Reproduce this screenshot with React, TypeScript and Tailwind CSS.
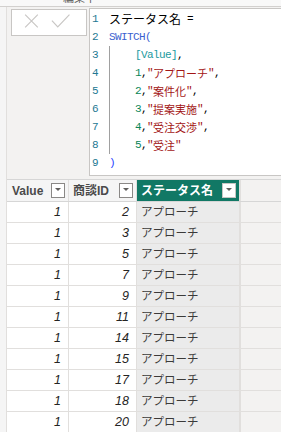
import React from "react";

const rows = [2, 3, 5, 7, 9, 11, 14, 15, 17, 18, 20];

const M = ({ c, children }: { c: string; children: React.ReactNode }) => (
  <span
    className={`${c} text-[11px] tracking-[-0.6px]`}
    style={{ fontFamily: '"Liberation Mono", monospace' }}
  >
    {children}
  </span>
);

const J = ({ c, children }: { c: string; children: React.ReactNode }) => (
  <span className={`${c} text-[11px]`} style={{ fontFamily: '"Noto Sans CJK JP", sans-serif' }}>
    {children}
  </span>
);

function CodeLine({ n, children, indent }: { n: number; children: React.ReactNode; indent?: boolean }) {
  return (
    <div className="flex h-[18px] items-center">
      <div
        className="w-[19px] pl-[2px] text-[11px] text-[#237893]"
        style={{ fontFamily: '"Liberation Mono", monospace' }}
      >
        {n}
      </div>
      {indent && <div className="w-[26px] h-[18px] border-l border-[#a0a0a0] shrink-0" />}
      <div className="flex items-center whitespace-pre">{children}</div>
    </div>
  );
}

function Drop({ light }: { light?: boolean }) {
  return (
    <div
      className={`w-[14px] h-[15px] bg-white border ${light ? "border-[#c8c6c4]" : "border-[#8a8886]"} flex justify-center pt-[4px] shrink-0`}
    >
      <div className="w-0 h-0 border-l-[3px] border-r-[3px] border-t-[3px] border-l-transparent border-r-transparent border-t-[#605e5c]" />
    </div>
  );
}

export default function App() {
  return (
    <div
      className="w-[281px] h-[432px] overflow-hidden bg-[#f3f2f1] flex flex-col"
      style={{ fontFamily: '"Liberation Sans", "Noto Sans CJK JP", sans-serif' }}
    >
      <div className="h-[7px] bg-[#f8f8f8] border-b border-[#d2d0ce] overflow-hidden shrink-0 pl-[63px]">
        <div className="text-[11px] leading-[12px] -mt-[8px] text-[#605e5c]">編集中</div>
      </div>
      <div className="flex flex-1 min-h-0">
        <div className="w-[7px] border-r border-[#e1dfdd] bg-[#f5f5f5] shrink-0" />
        <div className="flex-1 flex flex-col min-w-0">
          <div className="flex h-[169px] shrink-0">
            <div className="ml-[4px] mt-[2px] w-[76px] h-[27px] bg-white border border-[#c8c6c4] flex items-center shrink-0">
              <svg width="76" height="27" viewBox="0 0 76 27" className="block">
                <path d="M13.5 5.5 L26.5 18.5 M26.5 5.5 L13.5 18.5" stroke="#c8c6c4" strokeWidth="1.2" fill="none" />
                <path d="M41 11.5 L47 18 L59 5.5" stroke="#c8c6c4" strokeWidth="1.2" fill="none" />
              </svg>
            </div>
            <div className="ml-[2px] mt-[1px] flex-1 bg-white border border-r-0 border-[#c8c6c4] pt-[1px] min-w-0 overflow-hidden">
              <CodeLine n={1}>
                <span className="text-[12px] text-[#000]" style={{ fontFamily: '"Noto Sans CJK JP", sans-serif' }}>
                  ステータス名
                </span>
                <M c="text-black"> =</M>
              </CodeLine>
              <CodeLine n={2}>
                <M c="text-[#3a5fd0]">SWITCH(</M>
              </CodeLine>
              <CodeLine n={3} indent>
                <M c="text-[#1a9aa0]">[Value]</M>
                <M c="text-black">,</M>
              </CodeLine>
              <CodeLine n={4} indent>
                <M c="text-[#098658]">1</M>
                <M c="text-black">,</M>
                <M c="text-[#a31515]">"</M>
                <J c="text-[#a31515]">アプローチ</J>
                <M c="text-[#a31515]">"</M>
                <M c="text-black">,</M>
              </CodeLine>
              <CodeLine n={5} indent>
                <M c="text-[#098658]">2</M>
                <M c="text-black">,</M>
                <M c="text-[#a31515]">"</M>
                <J c="text-[#a31515]">案件化</J>
                <M c="text-[#a31515]">"</M>
                <M c="text-black">,</M>
              </CodeLine>
              <CodeLine n={6} indent>
                <M c="text-[#098658]">3</M>
                <M c="text-black">,</M>
                <M c="text-[#a31515]">"</M>
                <J c="text-[#a31515]">提案実施</J>
                <M c="text-[#a31515]">"</M>
                <M c="text-black">,</M>
              </CodeLine>
              <CodeLine n={7} indent>
                <M c="text-[#098658]">4</M>
                <M c="text-black">,</M>
                <M c="text-[#a31515]">"</M>
                <J c="text-[#a31515]">受注交渉</J>
                <M c="text-[#a31515]">"</M>
                <M c="text-black">,</M>
              </CodeLine>
              <CodeLine n={8} indent>
                <M c="text-[#098658]">5</M>
                <M c="text-black">,</M>
                <M c="text-[#a31515]">"</M>
                <J c="text-[#a31515]">受注</J>
                <M c="text-[#a31515]">"</M>
              </CodeLine>
              <CodeLine n={9}>
                <M c="text-[#1f3fff]">)</M>
              </CodeLine>
            </div>
          </div>
          <div className="mt-[3px] flex flex-col">
            <div className="flex h-[23px] border-t border-b border-[#d6d6d6]">
              <div className="w-[62px] border-r border-[#e1dfdd] bg-[#f5f5f5] flex items-center justify-between pl-[5px] pr-[3px]">
                <span className="text-[12px] font-bold text-[#4a4a4a]">Value</span>
                <Drop />
              </div>
              <div className="w-[68px] border-r border-[#e1dfdd] bg-[#f5f5f5] flex items-center justify-between pl-[4px] pr-[3px]">
                <span className="text-[12px] font-bold text-[#4a4a4a]">商談ID</span>
                <Drop />
              </div>
              <div className="w-[102px] bg-[#117865] flex items-center justify-between pl-[4px] pr-[3px]">
                <span className="text-[12px] font-bold text-white">ステータス名</span>
                <Drop light />
              </div>
              <div className="w-[2px] bg-[#e1dfdd]" />
            </div>
            {rows.map((r) => (
              <div key={r} className="flex h-[21px] border-b border-[#e1dfdd]">
                <div className="w-[62px] border-r border-[#e1dfdd] bg-white flex items-center justify-end pr-[7px] text-[12.5px] italic text-[#252423]">
                  1
                </div>
                <div className="w-[68px] border-r border-[#e1dfdd] bg-white flex items-center justify-end pr-[7px] text-[12.5px] italic text-[#252423]">
                  {r}
                </div>
                <div
                  className="w-[102px] bg-[#ebebeb] flex items-center pl-[4px] text-[11.5px] text-[#3b3a39]"
                  style={{ fontFamily: '"Noto Sans CJK JP", sans-serif' }}
                >
                  アプローチ
                </div>
                <div className="w-[2px] bg-[#e1dfdd]" />
              </div>
            ))}
          </div>
        </div>
      </div>
    </div>
  );
}
